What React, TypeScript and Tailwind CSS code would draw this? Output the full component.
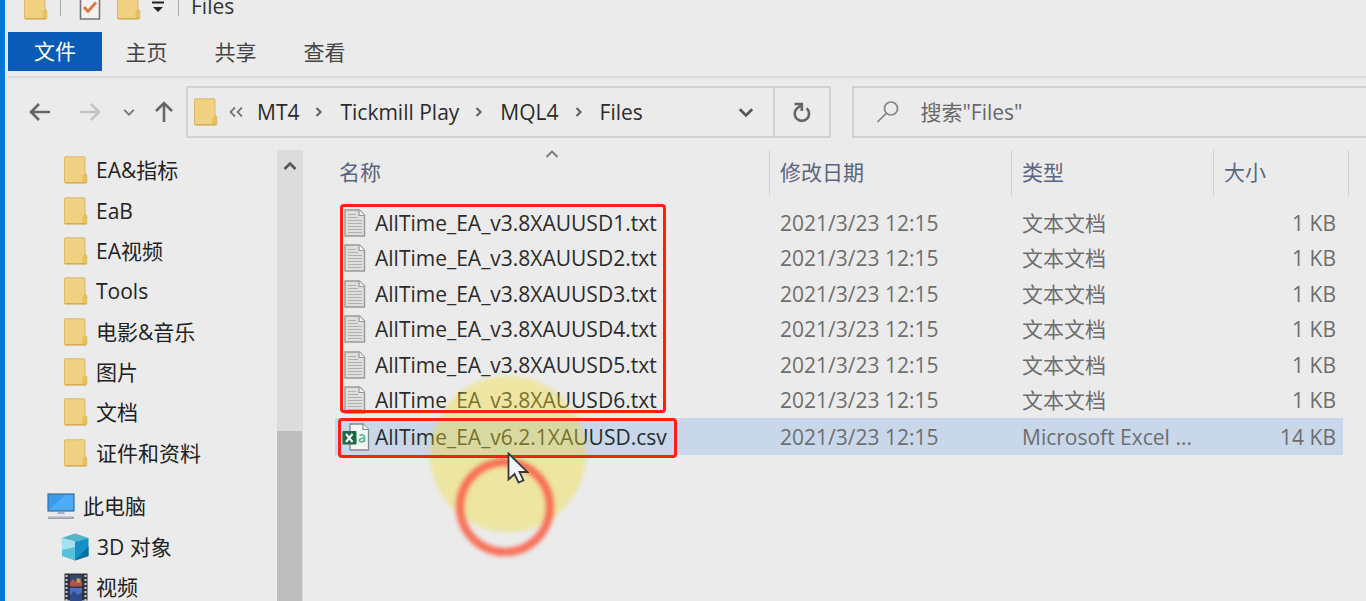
import { Fragment } from "react";

const tabs = ["主页", "共享", "查看"];
const crumbs = ["MT4", "Tickmill Play", "MQL4", "Files"];
const folders = ["EA&指标", "EaB", "EA视频", "Tools", "电影&音乐", "图片", "文档", "证件和资料"];

type FileRow = { name: string; type: string; size: string; csv?: boolean };

const files: FileRow[] = [
  ...[1, 2, 3, 4, 5, 6].map((n) => ({
    name: `AllTime_EA_v3.8XAUUSD${n}.txt`,
    type: "文本文档",
    size: "1 KB",
  })),
  { name: "AllTime_EA_v6.2.1XAUUSD.csv", type: "Microsoft Excel ...", size: "14 KB", csv: true },
];

function FolderIcon() {
  return (
    <svg width="24" height="28" viewBox="0 0 24 28" className="shrink-0" aria-hidden="true">
      <path d="M1.500 0.800H20a1 1 0 0 1 1 1V17l1.800 2v7.200a1 1 0 0 1-1 1H1.500a1 1 0 0 1-1-1V1.800a1 1 0 0 1 1-1Z" fill="#f0d182" stroke="#d9ba6c" strokeWidth="1" />
      <path d="M21 16.500 18.500 20v7h3.300a1 1 0 0 0 1-1v-7Z" fill="#e5bf5c" />
      <path d="M1.500 26.500h20" stroke="#d3ad55" strokeWidth="1" />
    </svg>
  );
}

function Chevron({ d, size, width = 2.2, color = "#555" }: { d: string; size: number; width?: number; color?: string }) {
  return (
    <svg width={size} height={size} viewBox="0 0 16 16" fill="none" stroke={color} strokeWidth={width} className="shrink-0" aria-hidden="true">
      <path d={d} />
    </svg>
  );
}

const DOWN = "M2.500 5.500 8 11l5.500-5.500";
const UP = "M2.500 11 8 5.500l5.500 5.500";
const RIGHT = "M5.500 4 9.500 8l-4 4";

function TextFileIcon() {
  return (
    <svg width="22" height="28" viewBox="0 0 22 28" className="mr-1 ml-px shrink-0" aria-hidden="true">
      <path d="M1 1h14.500l5 5v21H1Z" fill="#dedede" stroke="#999" strokeWidth="1.400" />
      <path d="M15 1v5.500h5.500" fill="#f5f5f5" stroke="#999" strokeWidth="1.200" />
      <path d="M4 5.500h8M4 8.500h10M4 11.500h14M4 14.500h14M4 17.500h14M4 20.500h14M4 23.500h14" stroke="#b0b0b0" strokeWidth="1.200" />
    </svg>
  );
}

function CsvIcon() {
  return (
    <svg width="28" height="28" viewBox="0 0 28 28" className="-ml-px shrink-0" aria-hidden="true">
      <path d="M8 1h13l5.500 5.500V27H8Z" fill="#f3f6f4" stroke="#7f8b87" strokeWidth="1.300" />
      <path d="M21 1v5.500h5.500" fill="#fff" stroke="#7f8b87" strokeWidth="1.200" />
      <rect x="0.500" y="8" width="14" height="13.500" rx="1" fill="#1a6b45" />
      <path d="m4 11 6.500 8M10.500 11 4 19" stroke="#fff" strokeWidth="2" />
      <path d="M17.500 12.500c2.500-1.200 5-.8 5 1.800V19M22.500 15.200c-3 0-5 .4-5 2.200 0 2.200 3.600 2 5-.4" fill="none" stroke="#5cb592" strokeWidth="1.700" />
    </svg>
  );
}

function ComputerIcon() {
  return (
    <svg width="28" height="28" viewBox="0 0 28 28" className="shrink-0" aria-hidden="true">
      <rect x="1" y="2" width="26" height="17" fill="#3a9bee" stroke="#3c6f9c" strokeWidth="1.200" />
      <path d="M2 18 18 3h8v15Z" fill="#5cb5fa" opacity=".6" />
      <path d="M11 20h6l1 2h-8Z" fill="#a5b4c2" />
      <path d="M1.500 24.500h25l.5 2.500H1Z" fill="#98a3ae" />
      <path d="M3 25h22" stroke="#c9d0d6" />
    </svg>
  );
}

function CubeIcon() {
  return (
    <svg width="28" height="28" viewBox="0 0 28 28" className="shrink-0" aria-hidden="true">
      <path d="M14 0.500 27.500 5 14 8.500 .5 5Z" fill="#55b4c9" />
      <path d="M.5 5 14 8.500v19L1 23Z" fill="#a6e2ee" />
      <path d="M1 17l13-3v13.500L1 23Z" fill="#39b4d4" opacity=".7" />
      <path d="M14 8.500 27.500 5v18L14 27.500Z" fill="#1492c8" />
      <path d="M14 27.500 27.500 13v10Z" fill="#066fa6" />
    </svg>
  );
}

function VideoIcon() {
  return (
    <svg width="24" height="28" viewBox="0 0 24 28" className="shrink-0" aria-hidden="true">
      <rect x="0.500" y="0.500" width="23" height="27" fill="#30343a" />
      <path d="M2.500 2v26M21.500 2v26" stroke="#c9ccd0" strokeWidth="2" strokeDasharray="2 2" />
      <rect x="6" y="2" width="12" height="11.500" fill="#34466e" />
      <path d="M6 9l3-3 3 3 3-2 3 2v4.500H6Z" fill="#b4524a" />
      <path d="M12.500 5.500h4v4h-4Z" fill="#c0a24c" />
      <rect x="6" y="15" width="12" height="13" fill="#4a6fc4" />
      <path d="M6 22l4-4 4 4 4-3v9H6Z" fill="#2f4a8e" />
    </svg>
  );
}

function Arrow({ d, color }: { d: string; color: string }) {
  return (
    <svg width="24" height="24" viewBox="0 0 24 24" fill="none" stroke={color} strokeWidth="2.600" aria-hidden="true">
      <path d={d} />
    </svg>
  );
}

function TitleBar() {
  return (
    <header className="overflow-hidden pb-2">
      <div className="-mt-3 flex h-9 items-center pl-4">
        <FolderIcon />
        <span className="ml-3 h-5 w-px bg-[#a9a9a9]" />
        <svg width="22" height="28" viewBox="0 0 22 28" className="ml-[18px]" aria-hidden="true">
          <path d="M1.500 1h19v26h-19Z" fill="#f3f1f1" stroke="#777" strokeWidth="1.600" />
          <path d="m5 15 4 4.500 8-9" fill="none" stroke="#e0753f" strokeWidth="2.800" />
        </svg>
        <span className="ml-4 flex">
          <FolderIcon />
        </span>
        <svg width="14" height="14" viewBox="0 0 14 14" className="ml-2.5" aria-hidden="true">
          <path d="M1 3.500h12" stroke="#222" strokeWidth="2" />
          <path d="M2 8h10l-5 5Z" fill="#222" />
        </svg>
        <span className="ml-[13px] h-5 w-px bg-[#a9a9a9]" />
        <h1 className="ml-3 text-[21px] leading-6 text-[#333]">Files</h1>
      </div>
    </header>
  );
}

function AddressRow() {
  return (
    <div className="flex h-[52px] items-stretch text-[21px] leading-7">
      <div className="flex w-[178px] shrink-0 items-center pl-5">
        <button aria-label="后退"><Arrow color="#666" d="M22 12H3M11 4l-8 8 8 8" /></button>
        <button aria-label="前进" className="ml-[26px]"><Arrow color="#c4c4c4" d="M2 12h19M13 4l8 8-8 8" /></button>
        <button aria-label="最近浏览的位置" className="ml-5"><Chevron d={DOWN} size={14} color="#777" /></button>
        <button aria-label="上移" className="ml-4"><Arrow color="#666" d="M12 22V3M4 11l8-8 8 8" /></button>
      </div>
      <nav className="flex min-w-0 flex-[642_1_0%] items-center border-2 border-[#d2d2d2]">
        <span className="ml-1.5 flex"><FolderIcon /></span>
        <span className="ml-2.5 flex">
          <svg width="16" height="16" viewBox="0 0 16 16" fill="none" stroke="#777" strokeWidth="1.800" aria-hidden="true">
            <path d="M7 3.500 2.500 8 7 12.500M14 3.500 9.500 8l4.500 4.500" />
          </svg>
        </span>
        {crumbs.map((c, i) => (
          <Fragment key={c}>
            {i > 0 && <span className="ml-3"><Chevron d={RIGHT} size={16} width={2.2} color="#666" /></span>}
            <button className="ml-[13px] whitespace-nowrap text-[#2b2b2b]">{c}</button>
          </Fragment>
        ))}
        <button aria-label="历史地址" className="mr-[18px] ml-auto"><Chevron d={DOWN} size={18} width={2.4} /></button>
        <button aria-label="刷新" className="flex w-14 items-center justify-center self-stretch border-l-2 border-[#d2d2d2]">
          <svg width="20" height="22" viewBox="0 0 20 22" fill="none" stroke="#666" strokeWidth="2.600" aria-hidden="true">
            <path d="M14.600 7.200A7.200 7.200 0 1 1 5.200 7.200L9.500 4" />
            <path d="M2.500 3h7.300v7" />
          </svg>
        </button>
      </nav>
      <label className="ml-[21px] flex min-w-0 flex-[490_1_0%] items-center border-2 border-r-0 border-[#d2d2d2] pl-[22px]">
        <svg width="24" height="24" viewBox="0 0 24 24" fill="none" stroke="#858585" strokeWidth="1.700" className="shrink-0" aria-hidden="true">
          <circle cx="15" cy="8.500" r="6.500" />
          <path d="M10.400 13.200 1.500 22" />
        </svg>
        <input
          type="search"
          aria-label="搜索"
          placeholder={'搜索"Files"'}
          className="ml-5 min-w-0 flex-1 bg-transparent outline-none placeholder:text-[#686868]"
        />
      </label>
    </div>
  );
}

function Sidebar() {
  return (
    <aside className="flex w-[295px] shrink-0 overflow-hidden">
      <div className="flex-1 whitespace-nowrap text-[21px] leading-7 text-[#222]">
        <ul className="grid h-[323px] auto-rows-fr">
          {folders.map((f) => (
            <li key={f} className="flex">
              <a href="#" className="flex flex-1 items-center gap-2 pl-14"><FolderIcon />{f}</a>
            </li>
          ))}
        </ul>
        <ul className="mt-[13px]">
          <li><a href="#" className="flex h-10 items-center gap-2 pl-[39px]"><ComputerIcon />此电脑</a></li>
          <li><a href="#" className="flex h-[41px] items-center gap-2 pl-[53px]"><CubeIcon />3D 对象</a></li>
          <li><a href="#" className="flex h-10 items-center gap-2 pl-14"><VideoIcon />视频</a></li>
        </ul>
      </div>
      <div className="flex w-[26px] flex-col bg-[#dcdcdc]">
        <button aria-label="向上滚动" className="flex h-[31px] items-center justify-center"><Chevron d={UP} size={16} width={2.6} /></button>
        <div className="mt-[250px] mr-px flex-1 bg-[#bebebe]" />
      </div>
    </aside>
  );
}

function PointerMarks() {
  return (
    <>
      <div className="pointer-events-none absolute top-[226px] left-[127px] size-[156px] rounded-full bg-[#f0dc32]/40 blur-[2px]" />
      <div className="pointer-events-none absolute top-[308px] left-[153px] size-[98px] rounded-full border-8 border-[#f9634a]/90 blur-[2px]" />
      <div className="pointer-events-none absolute top-[54px] left-[37px] h-[209px] w-[326px] rounded-sm border-3 border-[#ff1f12]" />
      <div className="pointer-events-none absolute top-[268px] left-[35px] h-10 w-[339px] rounded-sm border-3 border-[#ff1f12]" />
      <svg width="22" height="32" viewBox="0 0 22 32" className="pointer-events-none absolute top-[302px] left-[204px]" aria-hidden="true">
        <path d="M1.500 1.500v26l6-5.500 4 8.500 5-2.200-4-8.300h8Z" fill="#f4f4f6" stroke="#3a3a3a" strokeWidth="1.800" />
      </svg>
    </>
  );
}

function FileList() {
  return (
    <main className="relative min-w-0 flex-1 pr-[17px] pl-8">
      <table className="w-full table-fixed border-separate border-spacing-0 text-left text-[21px] leading-7 whitespace-nowrap">
        <colgroup>
          <col />
          <col className="w-[242px]" />
          <col className="w-[202px]" />
          <col className="w-[129px]" />
          <col className="w-[6px]" />
        </colgroup>
        <thead className="text-[#5a6580]">
          <tr className="h-[46px]">
            <th className="relative border-r border-[#d2d2d2] p-0 pb-0.5 pl-1 font-normal">
              名称
              <span className="absolute -top-1 left-1/2 -translate-x-1/2"><Chevron d={UP} size={16} width={1.800} color="#777" /></span>
            </th>
            <th className="border-r border-[#d2d2d2] p-0 pb-0.5 pl-2.5 font-normal">修改日期</th>
            <th className="border-r border-[#d2d2d2] p-0 pb-0.5 pl-2.5 font-normal">类型</th>
            <th className="p-0 pb-0.5 pl-2.5 font-normal">大小</th>
            <td className="border-r border-[#d2d2d2] p-0" />
          </tr>
        </thead>
        <tbody className="text-[#6e6e6e] before:block before:h-[9px]">
          {files.map((f) => (
            <tr key={f.name} className={f.csv ? "h-[37px] *:not-last:bg-[#c8d7ea]" : "odd:h-[35px] even:h-9"}>
              <td className="p-0 pl-2 text-[#2b2b2b]">
                <span className="flex items-center gap-[5px]">
                  {f.csv ? <CsvIcon /> : <TextFileIcon />}
                  {f.name}
                </span>
              </td>
              <td className="p-0 pl-2.5">2021/3/23 12:15</td>
              <td className="p-0 pl-2.5">{f.type}</td>
              <td className="p-0 pr-[7px] text-right">{f.size}</td>
              <td className="p-0" />
            </tr>
          ))}
        </tbody>
      </table>
      <PointerMarks />
    </main>
  );
}

export default function App() {
  return (
    <div className="flex h-screen flex-col overflow-hidden border-l-5 border-[#0078d7] bg-[#ebebeb] pl-[3px] font-['Open_Sans','Noto_Sans_CJK_SC',sans-serif]">
      <TitleBar />
      <div role="tablist" className="flex h-[46px] shrink-0 items-start border-b-2 border-[#dadada] text-[21px] leading-7 text-[#444]">
        <button role="tab" className="h-[39px] w-[94px] bg-[#0a5bb5] pb-0.5 text-white">文件</button>
        {tabs.map((t) => (
          <button role="tab" key={t} className="h-10 w-[89px]">{t}</button>
        ))}
      </div>
      <div className="mt-2 mb-3 shrink-0"><AddressRow /></div>
      <div className="flex min-h-0 flex-1">
        <Sidebar />
        <FileList />
      </div>
    </div>
  );
}
